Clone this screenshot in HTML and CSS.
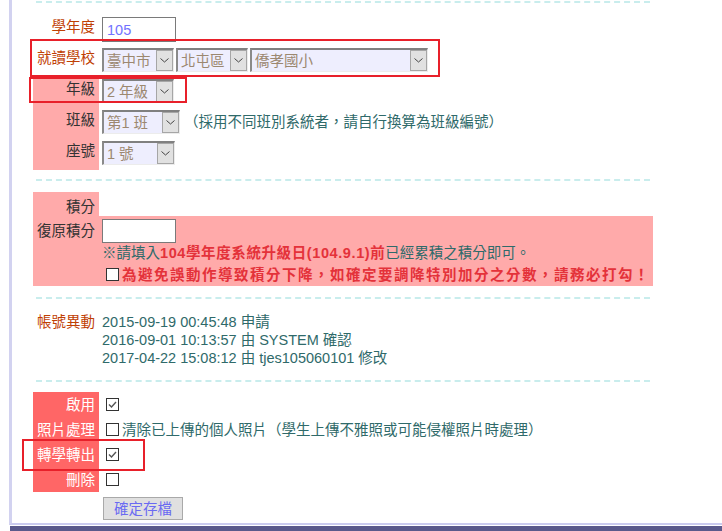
FILE: index.html
```html
<!DOCTYPE html>
<html lang="zh-Hant">
<head>
    <meta charset="UTF-8">
    <title>學生帳號資料</title>
    <link rel="stylesheet" href="styles.css">
</head>
<body>
<div class="frame">
    <hr class="sep">
    <!-- 基本資料 -->
    <div class="sec s1">
        <div class="row">
            <div class="lab hi">學年度</div>
            <div class="val"><input class="txt" type="text" value="105"></div>
        </div>
        <div class="row">
            <div class="lab hi">就讀學校</div>
            <div class="val">
                <span class="sel w72"><select><option>臺中市</option></select><i class="arr"><svg width="9" height="5" viewBox="0 0 9 5"><polyline points="0.5,0.5 4.5,4 8.5,0.5"/></svg></i></span>
                <span class="sel w72"><select><option>北屯區</option></select><i class="arr"><svg width="9" height="5" viewBox="0 0 9 5"><polyline points="0.5,0.5 4.5,4 8.5,0.5"/></svg></i></span>
                <span class="sel w178"><select><option>僑孝國小</option></select><i class="arr"><svg width="9" height="5" viewBox="0 0 9 5"><polyline points="0.5,0.5 4.5,4 8.5,0.5"/></svg></i></span>
            </div>
        </div>
        <div class="row">
            <div class="lab pink">年級</div>
            <div class="val">
                <span class="sel w72"><select><option>2 年級</option></select><i class="arr"><svg width="9" height="5" viewBox="0 0 9 5"><polyline points="0.5,0.5 4.5,4 8.5,0.5"/></svg></i></span>
            </div>
        </div>
        <div class="row">
            <div class="lab pink">班級</div>
            <div class="val">
                <span class="sel w78"><select><option>第1 班</option></select><i class="arr"><svg width="9" height="5" viewBox="0 0 9 5"><polyline points="0.5,0.5 4.5,4 8.5,0.5"/></svg></i></span>
                <span class="note">（採用不同班別系統者，請自行換算為班級編號）</span>
            </div>
        </div>
        <div class="row">
            <div class="lab pink">座號</div>
            <div class="val">
                <span class="sel w73"><select><option>1 號</option></select><i class="arr"><svg width="9" height="5" viewBox="0 0 9 5"><polyline points="0.5,0.5 4.5,4 8.5,0.5"/></svg></i></span>
            </div>
        </div>
    </div>

    <hr class="sep">
    <!-- 積分 -->
    <div class="sec s2">
        <div class="row r24">
            <div class="lab pink">積分</div>
            <div class="val"></div>
        </div>
        <div class="row pinkrow">
            <div class="lab">復原積分</div>
            <div class="val col">
                <input class="txt t24" type="text" value="">
                <div class="line1">※請填入<b>104學年度系統升級日(104.9.1)前</b>已經累積之積分即可。</div>
                <div class="line2"><span class="cb"></span><b>為避免誤動作導致積分下降，如確定要調降特別加分之分數，請務必打勾！</b></div>
            </div>
        </div>
    </div>

    <hr class="sep">
    <!-- 帳號異動 -->
    <div class="sec s3">
        <div class="row">
            <div class="lab hi">帳號異動</div>
            <div class="val col log">
                <div>2015-09-19 00:45:48 申請</div>
                <div>2016-09-01 10:13:57 由 SYSTEM 確認</div>
                <div>2017-04-22 15:08:12 由 tjes105060101 修改</div>
            </div>
        </div>
    </div>

    <hr class="sep">
    <!-- 狀態 -->
    <div class="sec s4">
        <div class="row r25">
            <div class="lab red">啟用</div>
            <div class="val"><span class="cb on"><svg width="11" height="11" viewBox="0 0 11 11"><polyline points="2,5.5 4.5,8 9,3"/></svg></span></div>
        </div>
        <div class="row r25">
            <div class="lab red">照片處理</div>
            <div class="val"><span class="cb"></span><span class="note">清除已上傳的個人照片（學生上傳不雅照或可能侵權照片時處理）</span></div>
        </div>
        <div class="row r25">
            <div class="lab red">轉學轉出</div>
            <div class="val"><span class="cb on"><svg width="11" height="11" viewBox="0 0 11 11"><polyline points="2,5.5 4.5,8 9,3"/></svg></span></div>
        </div>
        <div class="row r25">
            <div class="lab red">刪除</div>
            <div class="val"><span class="cb"></span></div>
        </div>
        <div class="row">
            <div class="lab"></div>
            <div class="val"><button class="save">確定存檔</button></div>
        </div>
    </div>

    <!-- 標示框 -->
    <div class="mark m1"></div>
    <div class="mark m2"></div>
    <div class="mark m3"></div>
</div>
<div class="bar"></div>
</body>
</html>
```

FILE: styles.css
```css
* {
    margin: 0;
    padding: 0;
}

html, body {
    background: #fff;
    overflow: hidden;
}

body {
    font-family: "Liberation Sans", "Noto Sans CJK TC", sans-serif;
    font-size: 14.5px;
    line-height: 18px;
    color: #333;
}

.frame {
    position: relative;
    margin-left: 9px;
    border-left: 3px solid #d2d2f0;
    border-bottom: 2px solid #cbcbef;
    padding: 1px 0 0 21px;
}

.bar {
    margin: 1px 0 0 10px;
    height: 8px;
    background: #5a598b;
}

.sep {
    border: 0;
    border-top: 2px dashed #c9eded;
    height: 0;
    width: 614px;
    margin: 0 3px;
}

.sec {
    width: 620px;
}

.s1 {
    padding: 12px 0 9px;
}

.s2 {
    padding: 11px 0;
}

.s3 {
    padding: 14px 0 13px;
}

.s4 {
    padding: 10px 0 3px;
}

.row {
    display: flex;
    min-height: 31px;
}

.s2 .row, .s3 .row, .s4 .row {
    min-height: 0;
}

.r24 {
    height: 24px;
}

.r25 {
    height: 25px;
}

.lab {
    width: 66px;
    flex-shrink: 0;
    box-sizing: border-box;
    padding: 3px 4px 0 0;
    text-align: right;
    white-space: nowrap;
}

.s2 .lab {
    padding-top: 6px;
}

.s3 .lab {
    padding-top: 0;
}

.s4 .lab {
    padding-top: 1px;
    line-height: 25px;
}

.lab.hi {
    color: #bf4004;
}

.lab.pink {
    background: #ffaaaa;
}

.lab.red {
    background: #ff6666;
    color: #fff;
}

.pinkrow {
    background: #ffaaaa;
}

.val {
    margin-left: 3px;
    padding-top: 2px;
    display: flex;
    align-items: center;
    align-self: flex-start;
    gap: 2px;
    color: #2f6a6a;
}

.val.col {
    flex-direction: column;
    align-items: flex-start;
    gap: 0;
}

.s2 .val {
    padding: 3px 0 1px;
}

.s3 .val, .s4 .val {
    padding-top: 0;
    align-self: stretch;
    gap: 0;
}

.txt {
    width: 74px;
    height: 25px;
    box-sizing: border-box;
    border: 1px solid #7a7a7a;
    background: #fff;
    font: inherit;
    color: #7272ff;
    padding: 0 4px;
    outline: none;
}

.txt.t24 {
    height: 24px;
}

.sel {
    display: inline-flex;
    height: 24px;
    box-sizing: border-box;
    border-top: 2px solid #808080;
    border-left: 2px solid #8a8a8a;
    border-right: 1px solid #ececec;
    border-bottom: 1px solid #ececec;
    background: #eeeefe;
}

.sel select {
    appearance: none;
    -webkit-appearance: none;
    flex: 1;
    min-width: 0;
    border: 0;
    background: transparent;
    font: inherit;
    color: #9c8870;
    padding-left: 3px;
    outline: none;
}

.sel .arr {
    width: 17px;
    box-sizing: border-box;
    border: 1px solid #a6a6a6;
    background: #e1e1e1;
    display: flex;
    align-items: center;
    justify-content: center;
}

.arr polyline {
    fill: none;
    stroke: #444;
    stroke-width: 1;
}

.w72 { width: 72px; }
.w73 { width: 73px; }
.w78 { width: 78px; }
.w178 { width: 178px; }

.note {
    color: #2f6a6a;
    margin-left: 2px;
}

.line1 {
    line-height: 21px;
    white-space: nowrap;
}

.line2 {
    display: flex;
    align-items: center;
    height: 21px;
    white-space: nowrap;
}

.s2 b {
    color: #e4323a;
    letter-spacing: 1.5px;
}

.line1 b {
    letter-spacing: 0.6px;
}

.cb {
    display: inline-flex;
    align-items: center;
    justify-content: center;
    width: 13px;
    height: 13px;
    box-sizing: border-box;
    border: 1.5px solid #333;
    background: #fff;
    margin: 0 3px 0 4px;
    flex-shrink: 0;
}

.cb polyline {
    fill: none;
    stroke: #555;
    stroke-width: 1.4;
}

.val .cb + .note {
    margin-left: 0;
}

.log {
    line-height: 18px;
    white-space: nowrap;
}

.save {
    width: 80px;
    height: 23px;
    margin: 5px 0 0 1px;
    border: 1px solid #a9a9a9;
    background: #e0e0e0;
    font: inherit;
    color: #6a6af2;
    padding: 0;
}

.mark {
    position: absolute;
    box-sizing: border-box;
    border: 2px solid #e8202a;
}

.m1 {
    left: 18px;
    top: 39px;
    width: 410px;
    height: 38px;
}

.m2 {
    left: 17px;
    top: 77px;
    width: 158px;
    height: 26px;
}

.m3 {
    left: 10px;
    top: 439px;
    width: 123px;
    height: 32px;
}
```
